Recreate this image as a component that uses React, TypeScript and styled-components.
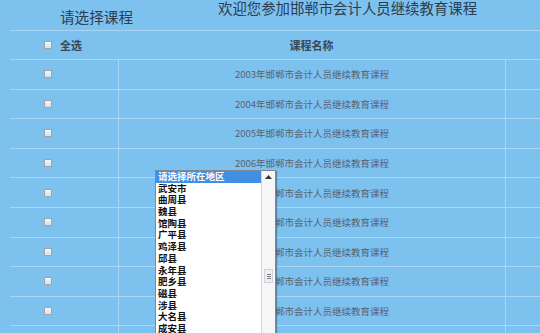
import React from "react";
import styled, { createGlobalStyle } from "styled-components";

const Global = createGlobalStyle`
  html, body { margin: 0; padding: 0; }
  body {
    background: #7dc1ef;
    font-family: "Noto Sans CJK SC", "Microsoft YaHei", sans-serif;
    overflow: hidden;
  }
`;

const LINE = "#a9d6f6";

const Page = styled.div`
  position: relative;
  width: 540px;
  height: 333px;
  overflow: hidden;
  background: #7dc1ef;
`;

const Header = styled.div`
  height: 30px;
  display: flex;
  align-items: flex-start;
`;

const Title = styled.div`
  margin: 9px 0 0 60px;
  font-size: 14.6px;
  line-height: 16px;
  color: #2c3d50;
`;

const Welcome = styled.div`
  margin: 0 0 0 85px;
  font-size: 14.4px;
  line-height: 16px;
  color: #2c3d50;
`;

const Table = styled.div`
  margin-left: 10px;
  border-top: 1px solid ${LINE};
`;

const HeadRow = styled.div`
  height: 29px;
  box-sizing: border-box;
  border-bottom: 1px solid ${LINE};
  display: grid;
  grid-template-columns: 108px 387px 1fr;
  align-items: center;
`;

const Row = styled.div`
  height: 29.6px;
  box-sizing: border-box;
  border-bottom: 1px solid ${LINE};
  display: grid;
  grid-template-columns: 108px 387px 1fr;
`;

const CheckCell = styled.div`
  display: flex;
  align-items: center;
  padding-left: 34px;
  gap: 8px;
`;

const Cell = styled.div<{ $divider?: boolean }>`
  display: flex;
  align-items: center;
  justify-content: center;
  border-left: ${(p) => (p.$divider ? `1px solid ${LINE}` : "none")};
`;

const Box = styled.span`
  width: 8px;
  height: 8px;
  box-sizing: border-box;
  border: 1px solid #9aa7b3;
  background: linear-gradient(#f6f8fa, #d9e0e6);
  display: inline-block;
`;

const HeadLabel = styled.span`
  font-size: 11px;
  font-weight: 700;
  color: #3a4656;
`;

const CourseName = styled.span`
  font-size: 9.5px;
  color: #58636f;
`;

const Dropdown = styled.div`
  position: absolute;
  left: 155px;
  top: 170px;
  width: 121px;
  height: 175px;
  box-sizing: border-box;
  background: #fff;
  border: 1px solid #7d8a96;
  display: flex;
  box-shadow: 1px 1px 1px rgba(60, 70, 80, 0.5);
`;

const List = styled.div`
  flex: 1;
  display: flex;
  flex-direction: column;
`;

const Option = styled.div<{ $active?: boolean }>`
  height: 11.7px;
  line-height: 11.7px;
  padding-left: 2px;
  font-size: 9.5px;
  font-weight: 700;
  white-space: nowrap;
  color: ${(p) => (p.$active ? "#fff" : "#111")};
  background: ${(p) => (p.$active ? "#3f8fe2" : "transparent")};
`;

const ScrollBar = styled.div`
  width: 13px;
  border-left: 1px solid #d3d7db;
  background: #f6f6f6;
  display: flex;
  flex-direction: column;
  align-items: center;
`;

const Arrow = styled.div`
  height: 12px;
  display: flex;
  align-items: center;
  justify-content: center;
`;

const Thumb = styled.div`
  margin-top: 86px;
  width: 9px;
  height: 14px;
  box-sizing: border-box;
  border: 1px solid #cfd3d7;
  background: #eceef0;
  display: flex;
  flex-direction: column;
  justify-content: center;
  align-items: center;
  gap: 1px;
`;

const Grip = styled.span`
  width: 4px;
  height: 1px;
  background: #7a7f85;
`;

const years = [2003, 2004, 2005, 2006, 2007, 2008, 2009, 2010, 2011, 2012];
const areas = [
  "请选择所在地区",
  "武安市",
  "曲周县",
  "魏县",
  "馆陶县",
  "广平县",
  "鸡泽县",
  "邱县",
  "永年县",
  "肥乡县",
  "磁县",
  "涉县",
  "大名县",
  "成安县",
];

export default function App() {
  return (
    <Page>
      <Global />
      <Header>
        <Title>请选择课程</Title>
        <Welcome>欢迎您参加邯郸市会计人员继续教育课程</Welcome>
      </Header>
      <Table>
        <HeadRow>
          <CheckCell>
            <Box />
            <HeadLabel>全选</HeadLabel>
          </CheckCell>
          <Cell>
            <HeadLabel>课程名称</HeadLabel>
          </Cell>
          <Cell />
        </HeadRow>
        {years.map((y) => (
          <Row key={y}>
            <CheckCell>
              <Box />
            </CheckCell>
            <Cell $divider>
              <CourseName>{y}年邯郸市会计人员继续教育课程</CourseName>
            </Cell>
            <Cell $divider />
          </Row>
        ))}
      </Table>
      <Dropdown>
        <List>
          {areas.map((a, i) => (
            <Option key={a} $active={i === 0}>
              {a}
            </Option>
          ))}
        </List>
        <ScrollBar>
          <Arrow>
            <svg width="7" height="4" viewBox="0 0 7 4">
              <path d="M0 4 L3.5 0 L7 4 Z" fill="#333" />
            </svg>
          </Arrow>
          <Thumb>
            <Grip />
            <Grip />
            <Grip />
          </Thumb>
        </ScrollBar>
      </Dropdown>
    </Page>
  );
}
